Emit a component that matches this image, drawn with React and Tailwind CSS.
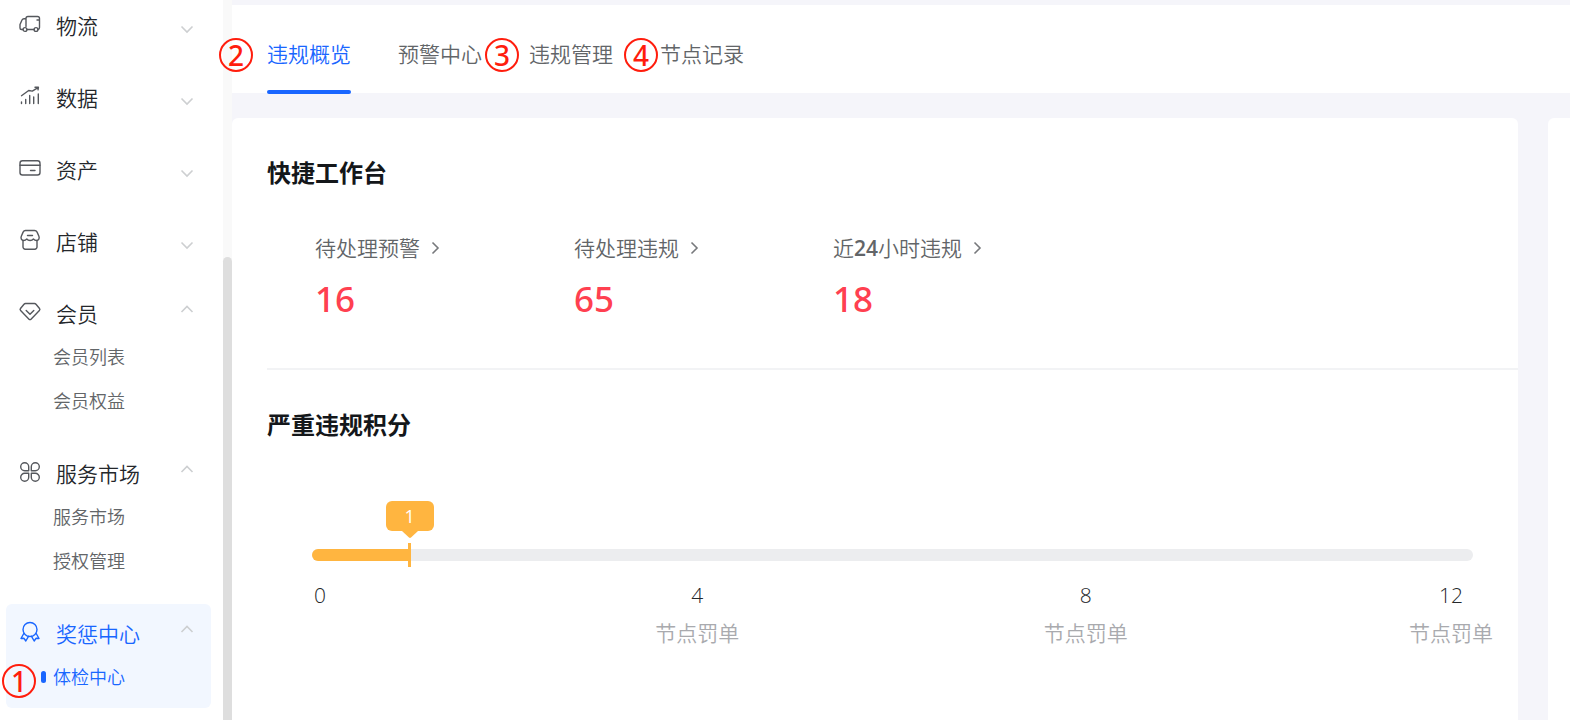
import clsx from "clsx";

const MENU = [
  { label: "物流", icon: TruckIcon },
  { label: "数据", icon: ChartIcon },
  { label: "资产", icon: CardIcon },
  { label: "店铺", icon: ShopIcon },
  { label: "会员", icon: MemberIcon, children: ["会员列表", "会员权益"] },
  { label: "服务市场", icon: MarketIcon, children: ["服务市场", "授权管理"] },
  { label: "奖惩中心", icon: AwardIcon, children: ["体检中心"], active: true },
];

const TABS = [
  { label: "违规概览", step: 2, stepClass: "-left-12", active: true },
  { label: "预警中心" },
  { label: "违规管理", step: 3, stepClass: "-left-11" },
  { label: "节点记录", step: 4, stepClass: "-left-9" },
];

const MAX_POINTS = 12;
const POINTS = 1;

function Icon({ children }) {
  return (
    <svg
      className="size-6 shrink-0"
      viewBox="0 0 24 24"
      fill="none"
      stroke="currentColor"
      strokeWidth="1.4"
      strokeLinecap="round"
      strokeLinejoin="round"
      aria-hidden="true"
    >
      {children}
    </svg>
  );
}

function TruckIcon() {
  return (
    <Icon>
      <path d="M8 14.5V6.5a2 2 0 0 1 2-2h9.500a2 2 0 0 1 2 2v9a2 2 0 0 1-1.500 2M16 17.500H9.200M4.800 17.500H3.500a1.500 1.500 0 0 1-1.500-1.500v-3.500l2-4.500a2.200 2.200 0 0 1 2-1.200h2M19 8h2.500" />
      <circle cx="7" cy="17.500" r="1.900" />
      <circle cx="18" cy="17.500" r="1.900" />
    </Icon>
  );
}

function ChartIcon() {
  return (
    <Icon>
      <path d="M3.5 11.7l7.2-5.2 3.6.6L20 3.6M17 3.2l3.4.1-.4 2.600M3.500 18v1.500M7.700 15.500v4M11.700 11.500v8M15.700 13v6.500M20.300 10v9.500" />
    </Icon>
  );
}

function CardIcon() {
  return (
    <Icon>
      <rect x="2" y="4.700" width="20" height="14.300" rx="2.500" />
      <path d="M2 9.300h20M12.500 14.500h4.500" />
    </Icon>
  );
}

function ShopIcon() {
  return (
    <Icon>
      <path d="M7.500 2.500h9a3 3 0 0 1 2.600 1.600l1.800 4.200c.8 2-.2 4.200-2.300 4.200-1.300 0-2.300-.5-3.200-1.500-.8 1-1.900 1.500-3.300 1.500s-2.500-.5-3.300-1.500c-.9 1-1.900 1.500-3.200 1.500-2.100 0-3.100-2.200-2.300-4.200l1.800-4.200A3 3 0 0 1 7.500 2.500z" />
      <path d="M5 12.500v6.500a2.200 2.200 0 0 0 2.200 2.200h9.600a2.200 2.200 0 0 0 2.200-2.200v-6.500M9.500 7.500h5" />
    </Icon>
  );
}

function MemberIcon() {
  return (
    <Icon>
      <path d="M7.500 3.500h9a2 2 0 0 1 1.500.7l3.500 4.300a1.500 1.500 0 0 1-.1 2l-8.400 8.700a1.400 1.400 0 0 1-2 0l-8.400-8.700a1.500 1.500 0 0 1-.1-2L6 4.200a2 2 0 0 1 1.500-.7z" />
      <path d="M8.200 10.500l3.800 3.700 3.800-3.700" />
    </Icon>
  );
}

function MarketIcon() {
  return (
    <Icon>
      <path d="M10.700 10.700H6.700a4 4 0 1 1 4-4zM13.300 10.700h4a4 4 0 1 0-4-4zM10.700 13.300H6.700a4 4 0 1 0 4 4zM13.300 13.300h4a4 4 0 1 1-4 4z" />
    </Icon>
  );
}

function AwardIcon() {
  return (
    <Icon>
      <circle cx="12" cy="9.500" r="7" />
      <path d="M5.800 13.500L3 18.500l3-.2L7.800 21l2.700-4.700M18.200 13.500l2.800 5-3-.2-1.800 2.700-2.700-4.700" />
    </Icon>
  );
}

function Arrow({ className, d }) {
  return (
    <svg
      className={className}
      viewBox="0 0 14 14"
      fill="none"
      stroke="currentColor"
      strokeWidth="1.6"
      aria-hidden="true"
    >
      <path d={d} />
    </svg>
  );
}

function Step({ number, className }) {
  return (
    <span
      className={clsx(
        "absolute z-10 grid size-[34px] place-items-center rounded-full border-2 border-[#ff1d0d] font-['Noto_Sans'] text-[28px] leading-none font-medium text-[#ff1d0d]",
        className,
      )}
    >
      {number}
    </span>
  );
}

function MenuGroup({ item }) {
  const ItemIcon = item.icon;
  const open = Boolean(item.children);

  return (
    <li
      className={clsx(
        "mb-3 rounded-md pt-[9px] pb-2",
        item.active && "bg-[#f2f7ff] text-[#1966ff]",
      )}
    >
      <button
        type="button"
        aria-expanded={open}
        className="flex h-[43px] w-full items-center pr-[17px] pl-3 text-left text-[21px] leading-8"
      >
        <span className={clsx("mr-[14px] pb-[6px]", !item.active && "text-[#55585d]")}>
          <ItemIcon />
        </span>
        <span className="flex-1 pb-0.5">{item.label}</span>
        {open ? (
          <Arrow
            className="mb-3 size-[14px] text-[#cdcfd1]"
            d="M1.500 10L7 4.500l5.500 5.500"
          />
        ) : (
          <Arrow
            className="mt-1 size-[14px] text-[#cdcfd1]"
            d="M1.500 4.500L7 10l5.500-5.500"
          />
        )}
      </button>
      {open && (
        <ul>
          {item.children.map((child) => (
            <li key={child}>
              <a
                href="#"
                className={clsx(
                  "relative flex h-11 items-center pb-0.5 pl-[47px] text-lg",
                  !item.active && "text-[#626568]",
                )}
              >
                {item.active && (
                  <>
                    <Step number={1} className="top-2 -left-1" />
                    <span className="absolute left-[35px] h-3 w-[5px] rounded-sm bg-[#1966ff]" />
                  </>
                )}
                {child}
              </a>
            </li>
          ))}
        </ul>
      )}
    </li>
  );
}

function Sidebar() {
  return (
    <aside className="flex w-[232px] shrink-0 bg-white">
      <nav className="-mt-1 flex-1 pr-3 pl-[6px]">
        <ul>
          {MENU.map((item) => (
            <MenuGroup key={item.label} item={item} />
          ))}
        </ul>
      </nav>
      <div className="flex w-[9px] flex-col bg-[#f9f9f9] pt-[257px]">
        <div className="flex-1 rounded-t-full bg-[#dedede]" />
      </div>
    </aside>
  );
}

function Tabs() {
  return (
    <nav className="flex h-[88px] gap-[47px] bg-white pl-[35px]">
      {TABS.map((tab) => (
        <button
          key={tab.label}
          type="button"
          className={clsx(
            "relative flex items-center pt-3 text-[21px]",
            tab.active ? "text-[#1966ff]" : "text-[#626568]",
          )}
        >
          {tab.step && <Step number={tab.step} className={tab.stepClass} />}
          {tab.label}
          {tab.active && (
            <span className="absolute inset-x-0 -bottom-px h-1 rounded-sm bg-[#1966ff]" />
          )}
        </button>
      ))}
    </nav>
  );
}

function Stat({ label, value }) {
  return (
    <div className="w-[259px]">
      <a
        href="#"
        className="flex items-center gap-2 text-[21px] leading-8 text-[#626568]"
      >
        <span>{label}</span>
        <Arrow
          className="size-[14px] text-[#77797c]"
          d="M4.500 1.500L10 7l-5.500 5.500"
        />
      </a>
      <p className="mt-[10px] font-['Noto_Sans'] text-[35px] leading-[50px] font-medium text-[#ff4050]">
        {value}
      </p>
    </div>
  );
}

function Mark({ value, note }) {
  return (
    <div className="w-fit text-center text-[21px] leading-[38px]">
      <p className="text-[#24272b]">{value}</p>
      {note && <p className="text-[#a9aaae]">{note}</p>}
    </div>
  );
}

function PointsBar() {
  const percent = `${(POINTS / MAX_POINTS) * 100}%`;

  return (
    <div className="mx-[45px] pt-[106px]">
      <div
        role="progressbar"
        aria-valuenow={POINTS}
        aria-valuemin={0}
        aria-valuemax={MAX_POINTS}
        aria-label="严重违规积分"
        className="relative h-3 rounded-full bg-[#ecedef]"
      >
        <div
          className="h-3 rounded-l-full bg-[#ffb540]"
          style={{ width: percent }}
        />
        <div
          className="absolute -top-12 -ml-[23px] flex w-12 flex-col items-center"
          style={{ left: percent }}
        >
          <span className="grid h-[30px] w-12 place-items-center rounded-md bg-[#ffb540] text-lg leading-none font-normal text-white">
            {POINTS}
          </span>
          <svg
            className="h-[7px] w-4"
            viewBox="0 0 16 7"
            fill="#ffb540"
            aria-hidden="true"
          >
            <path d="M0 0h16L9 6.500q-1 .8-2 0z" />
          </svg>
          <span className="mt-[5px] h-6 w-[3px] bg-[#ffb540]" />
        </div>
      </div>
      <div className="mt-[15px] -mr-5 ml-[2px] grid grid-cols-[341fr_388fr_365fr_84px]">
        <Mark value="0" />
        <Mark value="4" note="节点罚单" />
        <Mark value="8" note="节点罚单" />
        <Mark value="12" note="节点罚单" />
      </div>
    </div>
  );
}

export default function App() {
  return (
    <div className="flex h-screen overflow-hidden bg-[#f5f5fa] font-['Open_Sans','Noto_Sans_CJK_SC',sans-serif] font-[350] text-[#24272b]">
      <Sidebar />
      <main className="flex min-w-0 flex-1 flex-col pt-[5px]">
        <Tabs />
        <div className="mt-[25px] flex flex-1 gap-[30px]">
          <div className="flex-1 rounded-t-md bg-white pl-[35px]">
            <section className="border-b-2 border-[#f2f3f5] pt-[37px] pb-11">
              <h2 className="text-2xl leading-9 font-bold text-[#14171a]">
                快捷工作台
              </h2>
              <div className="mt-[41px] flex pl-12">
                <Stat label="待处理预警" value="16" />
                <Stat label="待处理违规" value="65" />
                <Stat
                  label={
                    <>
                      近<span className="font-semibold">24</span>小时违规
                    </>
                  }
                  value="18"
                />
              </div>
            </section>
            <section className="pt-[37px]">
              <h2 className="text-2xl leading-9 font-bold text-[#14171a]">
                严重违规积分
              </h2>
              <PointsBar />
            </section>
          </div>
          <div className="w-[22px] shrink-0 rounded-tl-md bg-white" />
        </div>
      </main>
    </div>
  );
}
